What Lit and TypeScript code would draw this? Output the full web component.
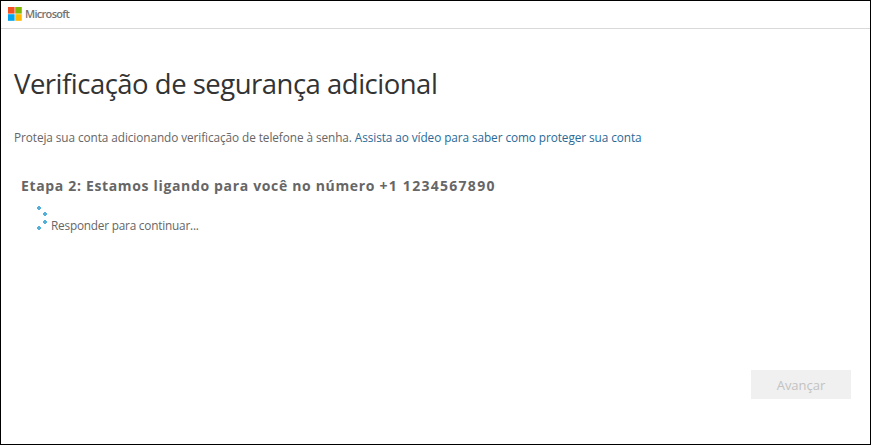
import { LitElement, html, css } from "lit";
import { customElement } from "lit/decorators.js";

@customElement("app-root")
export class AppRoot extends LitElement {
  static styles = css`
    :host {
      display: flex;
      flex-direction: column;
      box-sizing: border-box;
      width: 871px;
      height: 445px;
      border: 1px solid #000;
      background: #fff;
      color: #666;
      font-family: "Open Sans", "Noto Sans", sans-serif;
      font-size: 12px;
      line-height: 16px;
      overflow: hidden;
      white-space: nowrap;
    }
    header {
      display: flex;
      align-items: center;
      box-sizing: border-box;
      height: 28px;
      padding: 0 0 1px 7px;
      gap: 3px;
      border-bottom: 1px solid #d9d9d9;
    }
    .logo { width: 14px; height: 14px; display: block; }
    .brand { font-size: 11px; font-weight: 600; color: #737373; letter-spacing: -0.7px; }
    main { flex: 1; display: flex; flex-direction: column; padding: 36px 19px 45px 13px; }
    h1 { margin: 0; font-size: 27.5px; line-height: 38px; font-weight: 400; color: #333; letter-spacing: -0.5px; }
    .intro { margin: 25px 0 0; font-size: 11.8px; line-height: 18px; letter-spacing: -0.08px; }
    a { color: #2a6a96; text-decoration: none; }
    h2 { margin: 30px 0 0 7px; font-size: 14px; line-height: 20px; font-weight: 700; letter-spacing: 0.66px; }
    .phone { letter-spacing: 1.28px; }
    .status { display: flex; margin: 9px 0 0 22px; gap: 2px; font-size: 11.8px; letter-spacing: -0.21px; }
    .spinner { display: block; width: 13px; height: 26px; }
    .status span { padding-top: 12px; }
    button {
      margin: auto 0 0 auto;
      width: 100px;
      height: 29px;
      padding: 2px 0 0;
      border: 0;
      background: #f0f0f0;
      color: #c2c2c2;
      font: 400 13px/27px "Open Sans", "Noto Sans", sans-serif;
    }
  `;

  render() {
    return html`
      <header>
        <svg class="logo" viewBox="0 0 14 14">
          <path fill="#f25022" d="M0 0h6.6v6.6H0z" />
          <path fill="#7fba00" d="M7.2 0H13.8v6.6H7.2z" />
          <path fill="#00a4ef" d="M0 7.2h6.6v6.6H0z" />
          <path fill="#ffb900" d="M7.2 7.2H13.8v6.6H7.2z" />
        </svg>
        <span class="brand">Microsoft</span>
      </header>
      <main>
        <h1>Verificação de segurança adicional</h1>
        <p class="intro">
          <span class="lead">Proteja sua conta adicionando verificação de telefone à senha.</span>
          <a>Assista ao vídeo para saber como proteger sua conta</a>
        </p>
        <h2>Etapa 2: Estamos ligando para você no número <span class="phone">+1 1234567890</span></h2>
        <div class="status">
          <svg class="spinner" viewBox="0 0 13 26" fill="#54b0d8">
            <path d="M2 1h2v1h1v2h-1v1h-2v-1h-1v-2h1z" />
            <path d="M8 7h2v1h1v2h-1v1h-2v-1h-1v-2h1z" />
            <path d="M8 15h2v1h1v2h-1v1h-2v-1h-1v-2h1z" />
            <path d="M2 21h2v1h1v2h-1v1h-2v-1h-1v-2h1z" />
          </svg>
          <span>Responder para continuar...</span>
        </div>
        <button disabled>Avançar</button>
      </main>
    `;
  }
}
